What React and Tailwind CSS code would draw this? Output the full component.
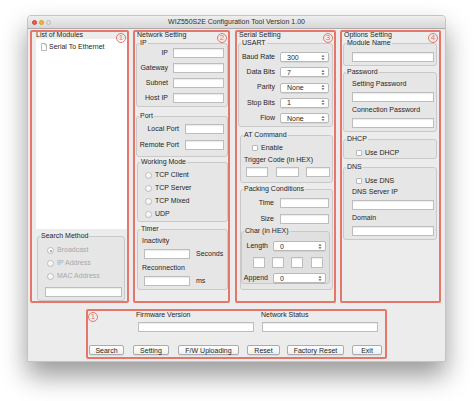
import React from 'react';

const Arrows = () => (
  <svg width="4" height="7" viewBox="0 0 4 7" className="shrink-0">
    <path d="M0.4 2.8 L2 0.9 L3.6 2.8Z M0.4 4.2 L2 6.1 L3.6 4.2Z" fill="#5a5a5a" />
  </svg>
);

const Field = ({ className = '' }) => (
  <input
    type="text"
    readOnly
    className={`block h-[10px] bg-white border border-[#bdbdbd] shadow-[inset_0_1px_1px_rgba(0,0,0,0.08)] outline-none ${className}`}
  />
);

const Select = ({ value, className = '' }) => (
  <div className={`flex items-center justify-between h-[10px] bg-white border border-[#b9b9b9] rounded-[2px] pl-[6px] pr-[3px] text-[7px] leading-none shadow-[0_1px_0_rgba(0,0,0,0.07)] ${className}`}>
    <span>{value}</span>
    <Arrows />
  </div>
);

const Group = ({ label, className = '', children }) => (
  <fieldset className={`border border-[#c9c9c9] rounded-[3px] bg-black/[0.025] ${className}`}>
    <legend className="ml-[2px] px-[1px] text-[7px] leading-[8px]">{label}</legend>
    {children}
  </fieldset>
);

const Radio = ({ label, checked, disabled }) => (
  <div className="flex items-center h-[13px]">
    <span className="flex items-center justify-center w-[7px] h-[7px] rounded-full border border-[#bdbdbd] bg-linear-to-b from-white to-[#f1f1f1]">
      {checked && <span className="w-[2px] h-[2px] rounded-full bg-[#9c9c9c]" />}
    </span>
    <span className={`ml-[3px] ${disabled ? 'text-[#a8a8a8]' : ''}`}>{label}</span>
  </div>
);

const Check = ({ label, className = '' }) => (
  <div className={`flex items-center h-[8px] ${className}`}>
    <span className="w-[6px] h-[6px] rounded-[1px] border border-[#b8b8b8] bg-white" />
    <span className="ml-[3px]">{label}</span>
  </div>
);

const Num = ({ n, className = '' }) => (
  <span className={`flex items-center justify-center w-[10px] h-[10px] rounded-full border border-[#e5766b] text-[#e5766b] text-[8px] leading-none ${className}`}>
    {n}
  </span>
);

const Panel = ({ title, num, titleClass = 'ml-[2px]', className = '', children }) => (
  <div className={`relative flex flex-col h-[273px] border-2 border-[#e5766b] rounded-[2px] ${className}`}>
    <div className={`-mt-[1px] h-[7px] leading-[7px] ${titleClass}`}>{title}</div>
    <Num n={num} className="absolute top-[1px] right-[1px]" />
    {children}
  </div>
);

const Row = ({ label, labelW, gap, children, className = '' }) => (
  <div className={`flex items-center h-[10px] ${className}`}>
    <span className="text-right shrink-0" style={{ width: labelW }}>{label}</span>
    <div style={{ marginLeft: gap }}>{children}</div>
  </div>
);

const DocIcon = () => (
  <svg width="6" height="8" viewBox="0 0 6 8">
    <path d="M0.5 0.5 H4 L5.5 2 V7.5 H0.5 Z" fill="#fff" stroke="#8a8a8a" strokeWidth="0.6" />
    <path d="M4 0.5 V2 H5.5" fill="none" stroke="#8a8a8a" strokeWidth="0.6" />
  </svg>
);

export default function App() {
  return (
    <div className="min-h-[401px] bg-white pt-[15px] pl-[27px] font-['Liberation_Sans',Arial,sans-serif] text-[7px] text-[#1f1f1f]">
      <div className="w-[419px] h-[347px] bg-[#ececec] rounded-t-[4px] border border-[#c4c4c4] shadow-[0_14px_26px_rgba(0,0,0,0.4)] overflow-hidden">
        {/* title bar */}
        <div className="grid grid-cols-[40px_1fr_40px] items-center h-[13px] bg-linear-to-b from-[#eeeeee] to-[#d8d8d8] border-b border-[#ababab]">
          <div className="flex items-center gap-[2px] pl-[4px]">
            <span className="w-[5px] h-[5px] rounded-full bg-[#ee5a50] border border-[#c8453c]" />
            <span className="w-[5px] h-[5px] rounded-full bg-[#f4b53f] border border-[#d49a2d]" />
            <span className="w-[5px] h-[5px] rounded-full bg-[#e3e3e3] border border-[#b9b9b9]" />
          </div>
          <div className="text-center text-[7px] text-[#2e2e2e]">WIZ550S2E Configuration Tool Version 1.00</div>
          <div />
        </div>

        {/* panels */}
        <div className="flex mt-[1px] ml-[2px]">
          <Panel title="List of Modules" num="1" titleClass="ml-[4px]" className="w-[99px]">
            <div className="ml-[4px] mt-[1px] w-[91px] h-[191px] bg-white">
              <div className="flex items-center pt-[3px] pl-[5px]">
                <DocIcon />
                <span className="ml-[2px]">Serial To Ethernet</span>
              </div>
            </div>
            <Group label="Search Method" className="ml-[5px] mt-[3px] w-[88px] pb-[3px]">
              <div className="ml-[9px] mt-[4px]">
                <Radio label="Broadcast" checked disabled />
                <Radio label="IP Address" disabled />
                <Radio label="MAC Address" disabled />
              </div>
              <Field className="ml-[7px] mt-[4px] w-[77px]" />
            </Group>
          </Panel>

          <Panel title="Network Setting" num="2" className="w-[97px] ml-[4px]">
            <Group label="IP" className="ml-[1px] mt-[1px] w-[92px] pb-[3px]">
              <div className="flex flex-col gap-[5px] mt-[1px]">
                <Row label="IP" labelW={31} gap={5}><Field className="w-[51px]" /></Row>
                <Row label="Gateway" labelW={31} gap={5}><Field className="w-[51px]" /></Row>
                <Row label="Subnet" labelW={31} gap={5}><Field className="w-[51px]" /></Row>
                <Row label="Host IP" labelW={31} gap={5}><Field className="w-[51px]" /></Row>
              </div>
            </Group>
            <Group label="Port" className="ml-[1px] mt-[5px] w-[92px] pb-[6px]">
              <Row label="Local Port" labelW={42} gap={6} className="mt-[4px]"><Field className="w-[39px]" /></Row>
              <Row label="Remote Port" labelW={42} gap={6} className="mt-[6px]"><Field className="w-[39px]" /></Row>
            </Group>
            <Group label="Working Mode" className="ml-[2px] mt-[1px] w-[91px]">
              <div className="ml-[7px] mt-[3px]">
                <Radio label="TCP Client" />
                <Radio label="TCP Server" />
                <Radio label="TCP Mixed" />
                <Radio label="UDP" />
              </div>
            </Group>
            <Group label="Timer" className="ml-[2px] mt-[3px] w-[91px] pb-[3px]">
              <div className="ml-[4px] mt-[4px] h-[8px] leading-[8px]">Inactivity</div>
              <div className="flex items-center mt-[4px] ml-[6px]">
                <Field className="w-[46px]" />
                <span className="ml-[6px]">Seconds</span>
              </div>
              <div className="ml-[4px] mt-[4px] h-[8px] leading-[8px]">Reconnection</div>
              <div className="flex items-center mt-[4px] ml-[6px]">
                <Field className="w-[46px]" />
                <span className="ml-[6px]">ms</span>
              </div>
            </Group>
          </Panel>

          <Panel title="Serial Setting" num="3" className="w-[101px] ml-[5px]">
            <Group label="USART" className="ml-[1px] mt-[1px] w-[95px] pb-[3px]">
              <div className="flex flex-col gap-[5.3px] mt-[5px]">
                <Row label="Baud Rate" labelW={36} gap={5}><Select value="300" className="w-[49px]" /></Row>
                <Row label="Data Bits" labelW={36} gap={5}><Select value="7" className="w-[49px]" /></Row>
                <Row label="Parity" labelW={36} gap={5}><Select value="None" className="w-[49px]" /></Row>
                <Row label="Stop Bits" labelW={36} gap={5}><Select value="1" className="w-[49px]" /></Row>
                <Row label="Flow" labelW={36} gap={5}><Select value="None" className="w-[49px]" /></Row>
              </div>
            </Group>
            <Group label="AT Command" className="ml-[3px] mt-[4px] w-[93px] pb-[5px]">
              <Check label="Enable" className="ml-[11px] mt-[5px]" />
              <div className="ml-[3px] mt-[4px] h-[8px] leading-[8px]">Trigger Code (in HEX)</div>
              <div className="flex mt-[3px] ml-[5px]">
                <Field className="w-[22px]" />
                <Field className="w-[23px] ml-[8px]" />
                <Field className="w-[24px] ml-[7px]" />
              </div>
            </Group>
            <Group label="Packing Conditions" className="ml-[3px] mt-[2px] w-[93px] pb-[5px]">
              <Row label="Time" labelW={33} gap={6} className="mt-[5px]"><Field className="w-[49px]" /></Row>
              <Row label="Size" labelW={33} gap={6} className="mt-[6px]"><Field className="w-[49px]" /></Row>
              <Group label="Char (in HEX)" className="mt-[3px] w-[89px]">
                <Row label="Length" labelW={26} gap={5} className="mt-[6px]"><Select value="0" className="w-[53px]" /></Row>
                <div className="flex mt-[6px] ml-[11px]">
                  <Field className="w-[12px] h-[11px]" />
                  <Field className="w-[12px] h-[11px] ml-[7px]" />
                  <Field className="w-[12px] h-[11px] ml-[7px]" />
                  <Field className="w-[12px] h-[11px] ml-[8px]" />
                </div>
                <Row label="Append" labelW={26} gap={5} className="mt-[5px]"><Select value="0" className="w-[53px]" /></Row>
              </Group>
            </Group>
          </Panel>

          <Panel title="Options Setting" num="4" className="w-[101px] ml-[4px]">
            <Group label="Module Name" className="ml-[1px] mt-[1px] w-[94px] pb-[3px]">
              <Field className="ml-[8px] mt-[5px] w-[82px]" />
            </Group>
            <Group label="Password" className="ml-[1px] mt-[2px] w-[94px] pb-[3px]">
              <div className="ml-[8px] mt-[4px] h-[8px] leading-[8px]">Setting Password</div>
              <Field className="ml-[8px] mt-[4px] w-[82px]" />
              <div className="ml-[8px] mt-[4px] h-[8px] leading-[8px]">Connection Password</div>
              <Field className="ml-[8px] mt-[4px] w-[82px]" />
            </Group>
            <Group label="DHCP" className="ml-[1px] mt-[3px] w-[94px] pb-[1px]">
              <Check label="Use DHCP" className="ml-[12px] mt-[6px]" />
            </Group>
            <Group label="DNS" className="ml-[1px] mt-[4px] w-[94px] pb-[3px]">
              <Check label="Use DNS" className="ml-[12px] mt-[6px]" />
              <div className="ml-[8px] mt-[3px] h-[8px] leading-[8px]">DNS Server IP</div>
              <Field className="ml-[8px] mt-[4px] w-[82px]" />
              <div className="ml-[8px] mt-[4px] h-[8px] leading-[8px]">Domain</div>
              <Field className="ml-[8px] mt-[4px] w-[82px]" />
            </Group>
          </Panel>
        </div>

        {/* status / buttons */}
        <div className="relative ml-[58px] mt-[6px] w-[301px] h-[50px] border-2 border-[#e5766b] rounded-[2px]">
          <Num n="1" className="absolute top-[1px] left-0" />
          <div className="flex pl-[48px]">
            <div className="w-[125px]">
              <div className="h-[7px] leading-[7px]">Firmware Version</div>
              <Field className="ml-[2px] mt-[4px] w-[116px]" />
            </div>
            <div>
              <div className="h-[7px] leading-[7px]">Network Status</div>
              <Field className="ml-[1px] mt-[4px] w-[116px]" />
            </div>
          </div>
          <div className="flex mt-[13px] ml-[1px]">
            {[
              ['Search', 'w-[35px]'],
              ['Setting', 'w-[36px] ml-[9px]'],
              ['F/W Uploading', 'w-[61px] ml-[9px]'],
              ['Reset', 'w-[33px] ml-[8px]'],
              ['Factory Reset', 'w-[57px] ml-[7px]'],
              ['Exit', 'w-[30px] ml-[8px]'],
            ].map(([t, c]) => (
              <button
                key={t}
                className={`h-[10px] border border-[#ababab] rounded-[2px] bg-linear-to-b from-white to-[#efefef] text-[7px] leading-none shadow-[0_1px_0_rgba(0,0,0,0.06)] ${c}`}
              >
                {t}
              </button>
            ))}
          </div>
        </div>
      </div>
    </div>
  );
}
